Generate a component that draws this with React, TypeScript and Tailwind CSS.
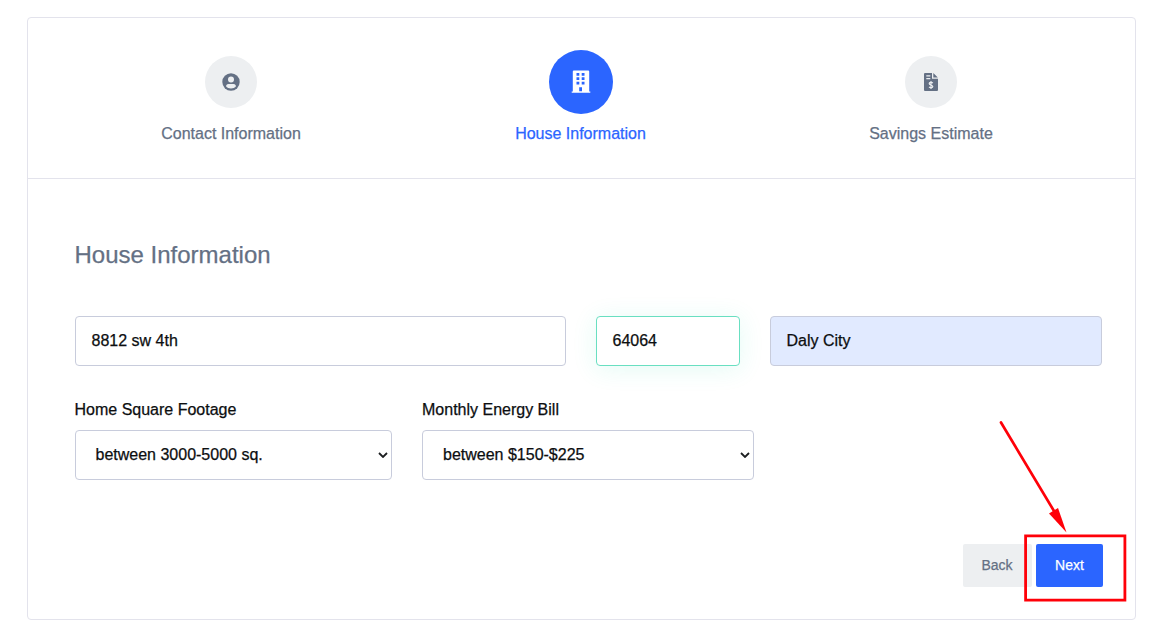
import { ReactNode } from "react";

function Step({ label, active, children }: { label: string; active?: boolean; children: ReactNode }) {
  return (
    <div className="flex w-[350px] flex-col items-center">
      <div className="flex h-16 items-center">
        <div
          className={
            active
              ? "flex h-16 w-16 items-center justify-center rounded-full bg-[#2b65ff] text-white"
              : "flex h-[52px] w-[52px] items-center justify-center rounded-full bg-[#edeff1] pb-px text-[#647084]"
          }
        >
          {children}
        </div>
      </div>
      <div className={active ? "mt-2 pr-px text-base text-[#2b65ff]" : "mt-2 text-base text-[#647084]"}>{label}</div>
    </div>
  );
}

function Chevron() {
  return (
    <svg className="h-[6px] w-[10px]" viewBox="0 0 10 6" fill="none" stroke="#1c1e20" strokeWidth="1.8">
      <path d="M1 1l4 4 4-4" />
    </svg>
  );
}

const field = "flex h-[50px] items-center rounded-[4px] border border-[#c8ccdc] pl-[15.5px] text-base";

export default function App() {
  return (
    <div className="relative h-[634px] w-[1155px] overflow-hidden bg-white pl-[27px] pt-[17px] font-['Liberation_Sans',Arial,sans-serif] text-[#0c0e10] [-webkit-text-stroke:0.25px]">
      <main className="h-[603px] w-[1109px] rounded-[4px] border border-[#e3e3ec]">
        <header className="flex h-[161px] border-b border-[#e3e3ec] pl-[28px] pt-8">
          <Step label="Contact Information">
            <svg className="h-[18px] w-[18px]" viewBox="0 0 18 18">
              <circle cx="9" cy="9" r="8.7" fill="currentColor" />
              <circle cx="9" cy="6.4" r="3" fill="#edeff1" />
              <path d="M4 13.300C4.300 10.700 6.500 10.900 9 10.900s4.700-.2 5 2.400c-2.300 3-7.700 3-10 0z" fill="#edeff1" />
            </svg>
          </Step>
          <Step label="House Information" active>
            <svg className="h-6 w-5" viewBox="0 0 20 24">
              <path d="M2.800.5h14.400q1 0 1 1v20h1.100v1.300H.7v-1.300h1.100v-20q0-1 1-1z" fill="currentColor" />
              <path
                d="M5.500 3h2.800v2.800H5.500zm5.200 0h2.800v2.800h-2.800zM5.500 7.300h2.800v2.800H5.500zm5.200 0h2.800v2.800h-2.800zM5.500 11.700h2.800v2.800H5.500zm5.200 0h2.800v2.800h-2.800zM8.200 17.200H11v4H8.200z"
                fill="#2b65ff"
              />
            </svg>
          </Step>
          <Step label="Savings Estimate">
            <svg className="h-[18px] w-[14px]" viewBox="0 0 14 18">
              <path d="M1 0h7v5.700h6V17q0 1-1 1H1q-1 0-1-1V1q0-1 1-1zM9.300 0l4.500 4.500H9.300z" fill="currentColor" />
              <path d="M2.300 2.900h4M2.300 5.600h4" stroke="#edeff1" strokeWidth="1.100" />
              <path
                d="M7 8v8M8.800 10.100C8 9 5.200 9.100 5.200 10.600c0 1.700 3.600 1.100 3.600 2.900 0 1.500-2.900 1.600-3.700.4"
                fill="none"
                stroke="#edeff1"
                strokeWidth="1.200"
              />
            </svg>
          </Step>
        </header>
        <section className="pl-[47px] pt-[60px]">
          <h1 className="-ml-[0.5px] text-[24px] leading-8 text-[#647084]">House Information</h1>
          <div className="mt-[45px] flex gap-[30px]">
            <div className={`${field} w-[491px]`}>8812 sw 4th</div>
            <div className="flex h-[50px] w-[144px] items-center rounded-[4px] border border-[#69dfc1] pl-[15.5px] text-base shadow-[0_3px_24px_#1ee0ac1f]">
              64064
            </div>
            <div className={`${field} w-[332px] bg-[#e1eaff]`}>Daly City</div>
          </div>
          <div className="mt-8 flex gap-[30px]">
            <div className="w-[317px]">
              <div className="-ml-[0.5px] h-8 text-base">Home Square Footage</div>
              <div className="flex h-[50px] items-center justify-between rounded-[4px] border border-[#c8ccdc] pl-[19.5px] pr-[3px] text-base">
                between 3000-5000 sq.
                <Chevron />
              </div>
            </div>
            <div className="w-[332px]">
              <div className="h-8 text-base">Monthly Energy Bill</div>
              <div className="flex h-[50px] items-center justify-between rounded-[4px] border border-[#c8ccdc] pl-5 pr-[3px] text-base">
                between $150-$225
                <Chevron />
              </div>
            </div>
          </div>
          <div className="mt-16 flex justify-end gap-1 pr-8 text-sm">
            <button className="h-[43px] w-[69px] rounded-[2px] bg-[#edeff1] pb-[2px] pr-px text-[#647084]">Back</button>
            <button className="h-[43px] w-[67px] rounded-[2px] bg-[#2b65ff] pb-[2px] text-white">Next</button>
          </div>
        </section>
      </main>
      <svg className="absolute left-[990px] top-[410px] h-[200px] w-[150px]" viewBox="990 410 150 200">
        <path d="M1025.600 535.900h99.300v64.200h-99.300z" fill="none" stroke="#ff0008" strokeWidth="2.800" />
        <path d="M1001 422.500l53 88.500" stroke="#ff0008" strokeWidth="2.700" strokeLinecap="round" />
        <path d="M1049 513.500l9-5.500 8.500 24.500z" fill="#ff0008" />
      </svg>
    </div>
  );
}
